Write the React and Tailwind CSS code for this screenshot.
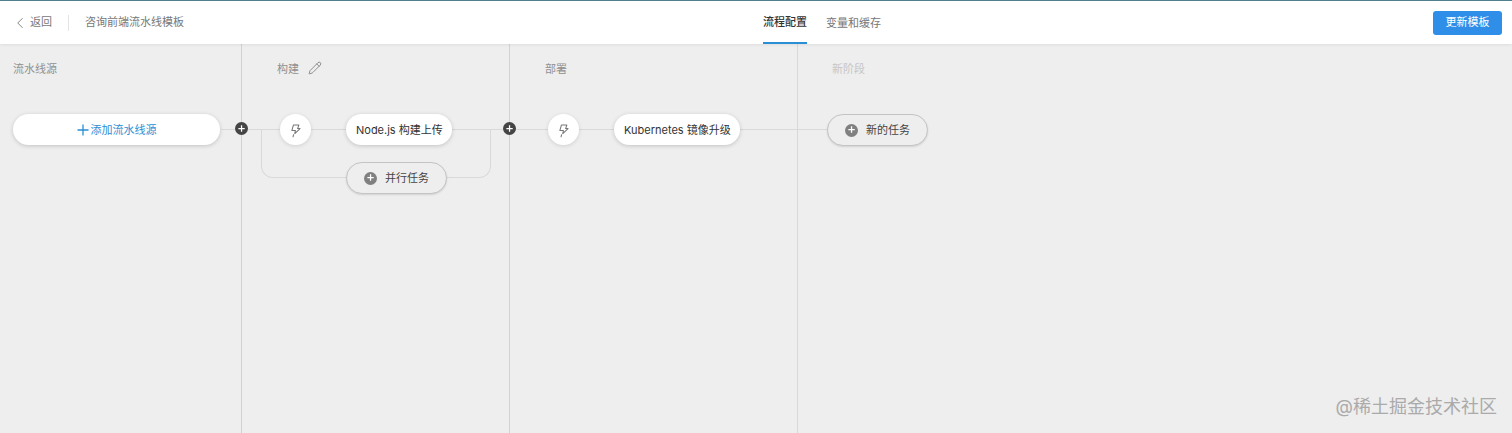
import { ChevronLeft, Pencil } from "lucide-react";

const FONT = "font-['Inter','Noto_Sans_CJK_SC',sans-serif]";

function PlusDot({ className }) {
  return (
    <span className={`flex items-center justify-center rounded-full ${className}`}>
      <svg viewBox="0 0 10 10" className="h-[70%] w-[70%]" fill="none" stroke="white" strokeWidth="1.4">
        <path d="M5 1.5v7M1.5 5h7" />
      </svg>
    </span>
  );
}

function Junction() {
  return <PlusDot className="absolute right-[-7px] top-[78px] z-10 h-[13px] w-[13px] bg-[#444444]" />;
}

function Bolt() {
  return (
    <div className="z-10 flex h-[31px] w-[31px] shrink-0 items-center justify-center rounded-full bg-white shadow-[0_1px_4px_rgba(0,0,0,0.13)]">
      <svg viewBox="0 0 12 16" className="mt-[2px] h-[14px] w-[11px]" fill="none" stroke="#777777" strokeWidth="1.2" strokeLinejoin="round" strokeLinecap="round">
        <path d="M3.6 1.2h6.2L8.4 5.2h2.8L5.2 11l.7-3.6H1.9z" />
        <path d="M3.8 12.2l-.6 2.4" />
      </svg>
    </div>
  );
}

function TaskPill({ children }) {
  return (
    <div className="z-10 flex h-[31px] shrink-0 items-center whitespace-nowrap rounded-full bg-white pl-[10px] pr-[9.5px] pt-px text-[11px] text-[#333333] shadow-[0_1px_4px_rgba(0,0,0,0.18)]">
      {children}
    </div>
  );
}

function AddPill({ children, className = "" }) {
  return (
    <div className={`z-10 flex h-[32px] w-[101px] shrink-0 items-center justify-center gap-[8px] rounded-full border border-[#c4c4c4] bg-[#eeeeee] text-[11px] text-[#444444] shadow-[0_1px_2px_rgba(0,0,0,0.12)] ${className}`}>
      <PlusDot className="h-[13px] w-[13px] bg-[#808080]" />
      <span className="pt-px">{children}</span>
    </div>
  );
}

function StageLabel({ children, className = "text-[#909090]" }) {
  return <div className={`flex h-[49px] items-center pt-[2px] text-[11px] ${className}`}>{children}</div>;
}

export default function App() {
  return (
    <div className={`flex h-screen flex-col overflow-hidden bg-[#eeeeee] ${FONT}`}>
      <header className="relative z-20 flex h-[44px] shrink-0 items-center border-t border-t-[#4f7f8a] bg-white pl-[15px] pr-[10px] shadow-[0_1px_3px_rgba(0,0,0,0.07)]">
        <div className="flex items-center text-[11px] text-[#777777]">
          <ChevronLeft size={18} strokeWidth={1.2} className="ml-[-4px]" />
          <span className="ml-px">返回</span>
        </div>
        <div className="ml-[16px] h-[16px] w-px bg-[#e4e4e4]" />
        <div className="ml-[16px] text-[11px] text-[#777777]">咨询前端流水线模板</div>
        <nav className="ml-[579px] flex h-full items-stretch gap-[19px] text-[11px]">
          <div className="flex items-center border-b-2 border-[#2a8fd6] pt-[2px] font-medium text-[#333333]">流程配置</div>
          <div className="flex items-center pt-[2px] text-[#777777]">变量和缓存</div>
        </nav>
        <button className="ml-auto h-[24px] w-[69px] rounded-[3px] bg-[#2f8fe8] text-[11px] text-white">更新模板</button>
      </header>

      <main className="flex flex-1">
        <section className="relative w-[242px] shrink-0 border-r border-[#d2d2d2] pl-[13px]">
          <StageLabel>流水线源</StageLabel>
          <div className="absolute left-[220px] right-0 top-[85px] h-px bg-[#d9d9d9]" />
          <div className="mt-[21px] flex h-[31px] w-[207px] items-center justify-center rounded-full bg-white pt-px text-[11px] text-[#2a8fd6] shadow-[0_1px_4px_rgba(0,0,0,0.18)]">
            <svg viewBox="0 0 12 12" className="mr-[2px] h-[12px] w-[12px]" fill="none" stroke="#2a8fd6" strokeWidth="1.3">
              <path d="M6 .5v11M.5 6h11" />
            </svg>
            添加流水线源
          </div>
          <Junction />
        </section>

        <section className="relative w-[268px] shrink-0 border-r border-[#d2d2d2] pl-[35px]">
          <StageLabel>
            <span>构建</span>
            <Pencil size={14} strokeWidth={1.2} className="mb-[3px] ml-[9px] text-[#666666]" />
          </StageLabel>
          <div className="absolute left-0 right-0 top-[85px] h-px bg-[#d9d9d9]" />
          <div className="absolute left-[19px] top-[85px] h-[49px] w-[230px] rounded-b-[12px] border-x border-b border-[#d9d9d9]" />
          <div className="relative ml-[3px] mt-[21px] flex items-center gap-[35px]">
            <Bolt />
            <TaskPill>Node.js 构建上传</TaskPill>
          </div>
          <AddPill className="relative ml-[69px] mt-[17px]">并行任务</AddPill>
          <Junction />
        </section>

        <section className="relative w-[288px] shrink-0 border-r border-[#d8d8d8] pl-[38px]">
          <StageLabel>
            <span className="ml-[-3px]">部署</span>
          </StageLabel>
          <div className="absolute left-0 right-0 top-[85px] h-px bg-[#d9d9d9]" />
          <div className="relative mt-[21px] flex items-center gap-[35px]">
            <Bolt />
            <TaskPill>Kubernetes 镜像升级</TaskPill>
          </div>
        </section>

        <section className="relative flex-1 pl-[29px]">
          <StageLabel className="pl-[5px] text-[#c6c6c6]">新阶段</StageLabel>
          <div className="absolute left-0 top-[85px] h-px w-[30px] bg-[#d9d9d9]" />
          <AddPill className="relative mt-[21px]">新的任务</AddPill>
        </section>
      </main>

      <div className="absolute bottom-[15px] right-[15px] z-30 text-[18px] leading-[22px] text-[#aaaaaa]">@稀土掘金技术社区</div>
    </div>
  );
}
